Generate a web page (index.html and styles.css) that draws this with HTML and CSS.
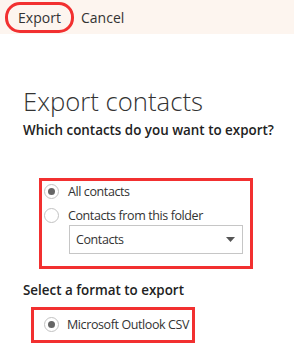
FILE: index.html
```html
<!DOCTYPE html>
<html>
<head>
<meta charset="utf-8">
<link rel="stylesheet" href="styles.css">
</head>
<body>
<div class="topbar">
  <button class="btn btn-export">Export</button>
  <button class="btn btn-cancel">Cancel</button>
</div>
<main class="content">
  <h1 class="title">Export contacts</h1>
  <h2 class="question">Which contacts do you want to export?</h2>
  <div class="group group-contacts">
    <label class="option"><span class="radio checked"></span><span>All contacts</span></label>
    <label class="option"><span class="radio"></span><span>Contacts from this folder</span></label>
    <div class="select">
      <span>Contacts</span>
      <svg class="caret" width="9" height="5" viewBox="0 0 9 5"><path d="M0 0 H9 L4.5 5 Z" fill="#555"/></svg>
    </div>
  </div>
  <h2 class="question q2">Select a format to export</h2>
  <div class="group group-format">
    <label class="option"><span class="radio checked"></span><span>Microsoft Outlook CSV</span></label>
  </div>
</main>
</body>
</html>
```
FILE: styles.css
```css
* { box-sizing: border-box; }
html, body { margin: 0; padding: 0; background: #fff; }
body {
  font-family: "Open Sans", "Liberation Sans", sans-serif;
  color: #333;
  width: 294px;
  height: 358px;
  overflow: hidden;
}
.topbar {
  height: 34px;
  background: #fdf5ef;
  display: flex;
  align-items: center;
  padding-left: 5px;
}
.btn {
  font-family: inherit;
  font-size: 14px;
  color: #333;
  background: none;
  border: 3px solid transparent;
  padding: 0;
  height: 31px;
  line-height: 25px;
}
.btn-export {
  border-color: #f23030;
  border-radius: 15px;
  width: 69px;
}
.btn-cancel {
  margin-left: 4px;
}
.content {
  padding-left: 23px;
}
.title {
  margin: 51px 0 0 0;
  font-size: 25.7px;
  font-weight: 300;
  line-height: 34px;
  color: #333;
  white-space: nowrap;
}
.question {
  margin: 1px 0 0 0;
  font-size: 13.4px;
  font-weight: 600;
  line-height: 20px;
  color: #222;
  white-space: nowrap;
}
.q2 { margin-top: 11px; }
.group {
  border: 3px solid #f23030;
  font-family: "Open Sans", sans-serif;
  font-size: 12.5px;
  letter-spacing: -0.4px;
  white-space: nowrap;
}
.group-contacts {
  margin: 38px 0 0 16px;
  width: 214px;
  padding: 0 0 12px 2px;
  display: flex;
  flex-direction: column;
  gap: 4px;
}
.group-format {
  margin: 7px 0 0 8px;
  width: 164px;
  height: 36px;
  padding: 0 0 2px 10px;
}
.group-format .option { height: 28px; gap: 8px; }
.option {
  display: flex;
  align-items: center;
  height: 20px;
  gap: 9px;
}
.radio {
  width: 15px;
  height: 15px;
  border: 1px solid #c2c2c2;
  border-radius: 50%;
  display: flex;
  align-items: center;
  justify-content: center;
  flex: none;
}
.radio.checked::after {
  content: "";
  width: 7px;
  height: 7px;
  border-radius: 50%;
  background: #666;
}
.select {
  margin: -4px 0 0 25px;
  width: 174px;
  height: 29px;
  border: 1px solid #c6c6c6;
  display: flex;
  align-items: center;
  justify-content: space-between;
  padding: 0 7px 0 6px;
}
```
